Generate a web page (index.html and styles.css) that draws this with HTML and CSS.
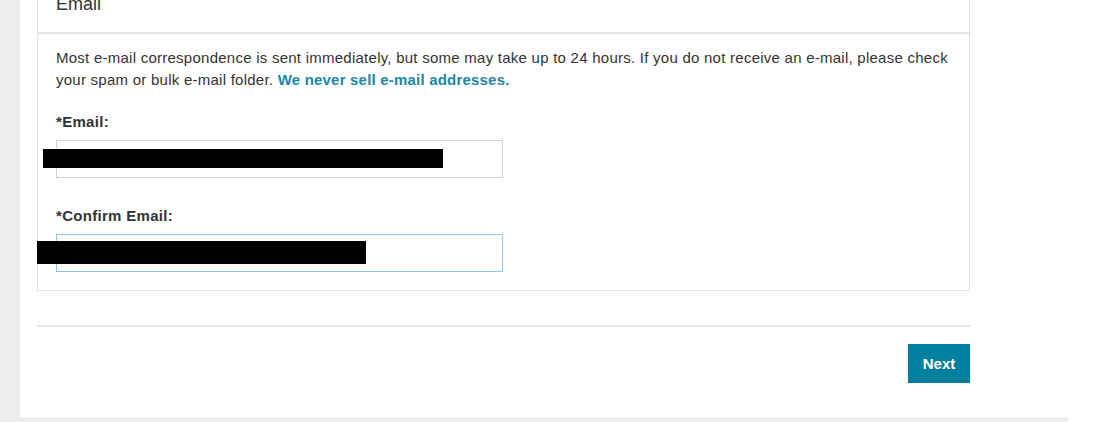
FILE: index.html
```html
<!DOCTYPE html>
<html>
<head>
<meta charset="utf-8">
<link rel="stylesheet" href="styles.css">
</head>
<body>
<div class="page">
  <div class="side"></div>
  <div class="main">
    <div class="card">
      <div class="content">
        <section class="panel">
          <h2 class="panel-head">Email</h2>
          <div class="panel-body">
            <p class="intro">Most e-mail correspondence is sent immediately, but some may take up to 24 hours. If you do not receive an e-mail, please check your spam or bulk e-mail folder. <a class="link" href="#">We never sell e-mail addresses.</a></p>
            <label class="label">*Email:</label>
            <div class="field">
              <input class="input" type="text">
              <span class="redact redact-1"></span>
            </div>
            <label class="label label-2">*Confirm Email:</label>
            <div class="field">
              <input class="input input-focus" type="text">
              <span class="redact redact-2"></span>
            </div>
          </div>
        </section>
        <hr class="rule">
        <div class="actions">
          <button class="btn" type="button">Next</button>
        </div>
      </div>
    </div>
    <div class="band"></div>
  </div>
</div>
</body>
</html>
```

FILE: styles.css
```css
html, body {
  margin: 0;
  padding: 0;
  background: #ffffff;
  height: 422px;
  overflow: hidden;
}
body {
  font-family: "Liberation Sans", Arial, sans-serif;
  color: #333333;
}
.page {
  display: flex;
  height: 422px;
}
.side {
  width: 20px;
  flex: none;
  background: #ededed;
}
.main {
  width: 1048px;
  flex: none;
  display: flex;
  flex-direction: column;
}
.card {
  background: #ffffff;
  height: 417px;
  flex: none;
  overflow: hidden;
}
.band {
  flex: 1;
  background: #ededed;
}
.content {
  margin-top: -16px;
  padding-left: 17px;
  width: 933px;
}
.panel {
  border: 1px solid #e3e3e3;
  border-top: none;
}
.panel-head {
  margin: 0;
  font-weight: normal;
  font-size: 18px;
  line-height: 20px;
  padding: 10px 18px 18px;
  border-bottom: 2px solid #e5e5e5;
  color: #333;
}
.panel-body {
  padding: 13px 18px 18px;
}
.intro {
  margin: 0;
  font-size: 15px;
  letter-spacing: 0.25px;
  line-height: 22px;
  color: #333;
}
.link {
  color: #1a87a8;
  font-weight: bold;
  text-decoration: none;
  letter-spacing: 0.2px;
}
.label {
  display: block;
  margin-top: 22px;
  margin-bottom: 9px;
  font-size: 15px;
  letter-spacing: 0.3px;
  line-height: 18px;
  font-weight: bold;
  color: #333;
}
.label-2 {
  margin-top: 29px;
}
.field {
  position: relative;
  width: 447px;
}
.input {
  display: block;
  box-sizing: border-box;
  width: 447px;
  height: 38px;
  margin: 0;
  border: 1px solid #d2d2d2;
  background: #fff;
  padding: 0 10px;
  font: 14px "Liberation Sans", Arial, sans-serif;
}
.input-focus {
  border-color: #8ec5ef;
}
.redact {
  position: absolute;
  background: #000;
}
.redact-1 {
  left: -13px;
  top: 9px;
  width: 400px;
  height: 19px;
}
.redact-2 {
  left: -19px;
  top: 7px;
  width: 329px;
  height: 23px;
}
.rule {
  margin: 34px 0 0;
  border: none;
  height: 2px;
  background: #e5e5e5;
}
.actions {
  display: flex;
  justify-content: flex-end;
  padding-top: 17px;
}
.btn {
  width: 62px;
  height: 39px;
  border: none;
  background: #00809f;
  color: #ffffff;
  font: bold 15px "Liberation Sans", Arial, sans-serif;
  padding: 0;
}
```
